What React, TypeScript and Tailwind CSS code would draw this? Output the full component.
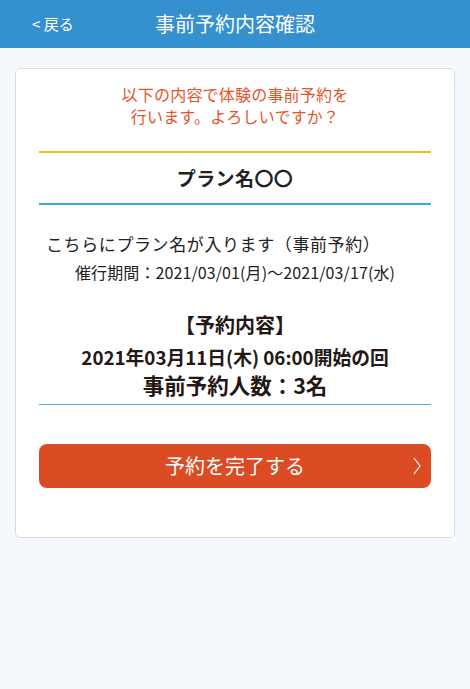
const font = "font-['Noto_Sans_CJK_JP','Noto_Sans',sans-serif]";

const App = (): JSX.Element => (
  <div className={`min-h-[689px] bg-[#f5f9fd] ${font}`}>
    <header className="relative flex h-[48px] items-center justify-center bg-[#3590d0] text-white">
      <a className="absolute left-[32px] top-[13px] text-[15px] leading-[22px]">&lt; 戻る</a>
      <h1 className="text-[20px] leading-[26px]">事前予約内容確認</h1>
    </header>

    <main className="px-[15px] pt-[20px]">
      <section className="rounded-[5px] border border-[#d9dde2] bg-white px-[23px] pb-[49px] pt-[14px]">
        <p className="text-center text-[16px] leading-[22px] tracking-[0.2px] text-[#e8532b]">
          以下の内容で体験の事前予約を
          <br />
          行います。よろしいですか？
        </p>

        <div className="mt-[24px] border-y-2 border-t-[#f6be12] border-b-[#3aa8e6] py-[12px] text-center text-[19px] font-bold leading-[26px] tracking-[0.4px] text-[#222]">
          プラン名〇〇
        </div>

        <div className="mt-[27px] text-[#222]">
          <p className="pl-[7px] text-[17px] leading-[24px] tracking-[0.6px]">こちらにプラン名が入ります（事前予約）</p>
          <p className="mt-[5px] pl-[36px] text-[16px] leading-[22px] tracking-[0.1px]">
            催行期間：2021/03/01(月)〜2021/03/17(水)
          </p>
        </div>

        <div className="mt-[28px] border-b border-[#5aa9dc] pb-[4px] text-center font-bold text-[#231815]">
          <p className="text-[20px] leading-[28px]">【予約内容】</p>
          <p className="mt-[6px] text-[18.75px] leading-[24px]">2021年03月11日(木) 06:00開始の回</p>
          <p className="mt-[1px] text-[21.5px] leading-[30px]">事前予約人数：3名</p>
        </div>

        <button className="relative mt-[39px] flex h-[44px] w-full items-center justify-center rounded-[8px] bg-[#dc4c24] text-[20px] text-white">
          予約を完了する
          <svg className="absolute right-[10px] top-[13px]" width="8" height="18" viewBox="0 0 8 18" fill="none">
            <polyline points="1,1 7,9 1,17" stroke="white" strokeWidth="1.2" />
          </svg>
        </button>
      </section>
    </main>
  </div>
);

export default App;
